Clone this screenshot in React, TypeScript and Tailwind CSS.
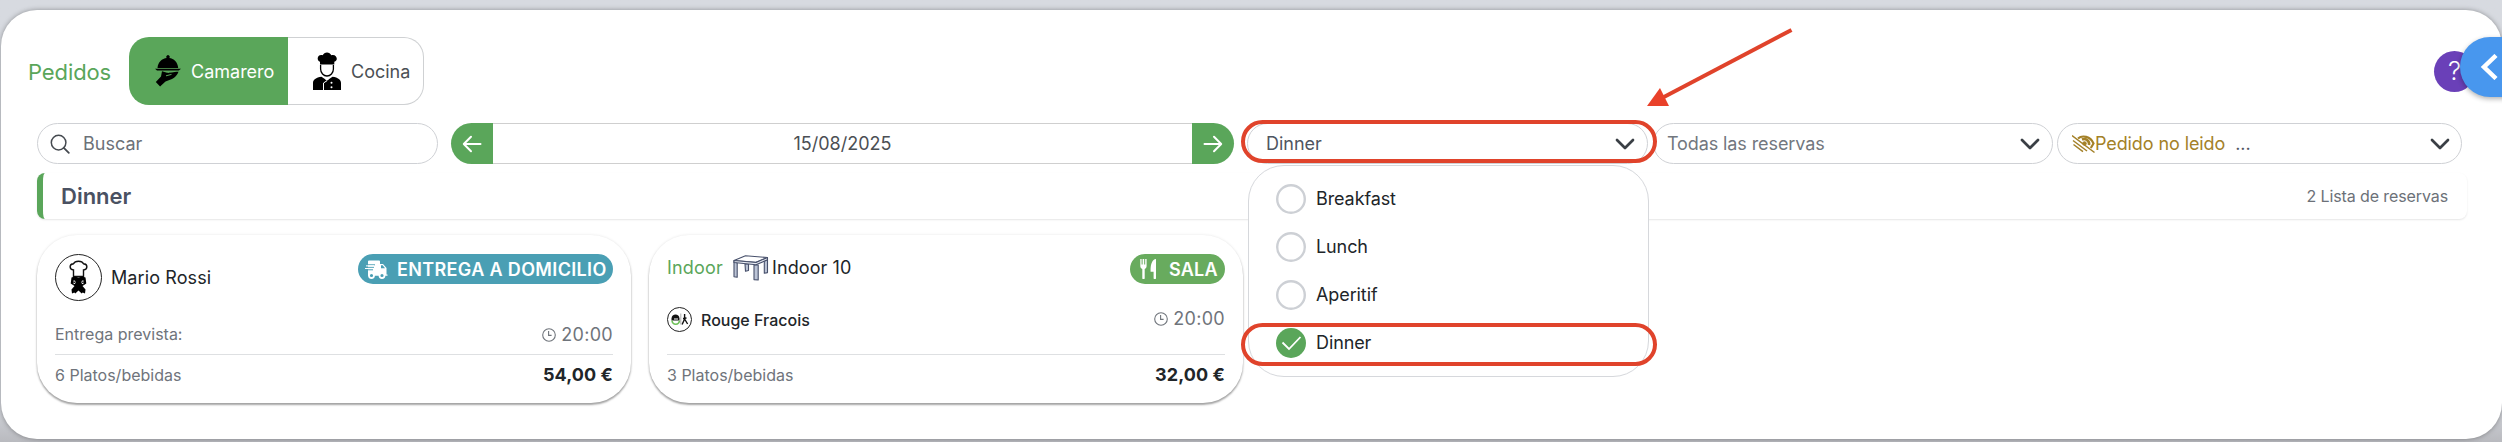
import React from "react";

const ChevronDown = () => (
  <svg width="20" height="14" viewBox="0 0 20 14" fill="none" stroke="#3a3f45" strokeWidth="2.7" strokeLinecap="round" strokeLinejoin="round">
    <path d="M2 3l8 8 8-8" />
  </svg>
);

const Arrow = ({ className = "" }) => (
  <svg className={className} width="20" height="18" viewBox="0 0 20 18" fill="none" stroke="#fff" strokeWidth="2" strokeLinecap="round" strokeLinejoin="round">
    <path d="M1.5 9H18M11 1.8L18.2 9 11 16.2" />
  </svg>
);

const WaiterIcon = () => (
  <svg width="26" height="32" viewBox="0 0 26 32">
    <path d="M2.5 13C3 7 7 3.6 11.8 3.1a1.7 1.7 0 1 1 2.4 0C19 3.6 22.6 7 23.2 13z" />
    <path d="M0 13.8h26l-2.2 1.7H2z" />
    <path d="M7 16.3l5 1.500c2.500.6 4.500-.8 11.500-1-1 3.400-3.600 5.600-6.500 7.300l-6.500 2.400-5.400 5L.8 27l5.200-5.500z" />
    <path d="M11 20.800l5.500-1.400" stroke="#5aa65a" strokeWidth="1" />
  </svg>
);

const CookIcon = () => (
  <svg width="28" height="38" viewBox="0 0 28 38">
    <path d="M7 12.500V9.800C3.500 8.500 4 3 8.300 3c.5 0 1 .1 1.400.3C11-.6 17-.6 18.300 3.300 23.500 1.500 26 8.500 21.300 9.800v2.700z" />
    <path d="M7.600 13v4c0 4 3 7 6.400 7s6.400-3 6.400-7v-4" fill="#fff" stroke="#000" strokeWidth="1.300" />
    <path d="M0 38v-7c0-3.500 3-5.500 8.500-6.300L14 28.500l5.500-3.800C25 25.500 28 27.500 28 31v7z" />
    <path d="M10.500 38V31l3.500-2.300" fill="none" stroke="#fff" strokeWidth="1" />
    <path d="M14 25l-2 2 2 1.500 2-1.500z" fill="#fff" />
    <circle cx="18.500" cy="30.800" r="1" fill="#fff" />
    <circle cx="18.500" cy="35.200" r="1" fill="#fff" />
  </svg>
);

const SearchIcon = () => (
  <svg width="20" height="20" viewBox="0 0 20 20" fill="none" stroke="#454a50" strokeWidth="1.500">
    <circle cx="8.600" cy="8.600" r="7.300" />
    <path d="M13.800 13.800l5 5" strokeLinecap="round" strokeWidth="1.800" />
  </svg>
);

const EyeOffIcon = () => (
  <svg width="23" height="20" viewBox="0 0 23 20" fill="none" stroke="#a48128">
    <path d="M6 4.500C10 1 18.500 2 21.500 9.500L18.800 14" strokeWidth="2.200" />
    <path d="M10 5.500a5 5 0 0 1 7 5.500" strokeWidth="2.600" />
    <circle cx="12.500" cy="9.500" r="1.800" fill="#a48128" />
    <path d="M0 1.500L22.500 18.500M1 6.500l14 10.500M1.500 10.500l9.500 7.200" strokeWidth="1.500" />
  </svg>
);

const ClockIcon = () => (
  <svg width="14" height="14" viewBox="0 0 14 14" fill="none" stroke="#6f747b" strokeWidth="1.100">
    <circle cx="7" cy="7" r="6.300" />
    <path d="M6.600 3v4.400h3" />
  </svg>
);

const TruckIcon = () => (
  <svg width="23" height="19" viewBox="0 0 23 19">
    <path fill="#fff" d="M3 1.500Q3 .5 4 .5h10q1 0 1 1V4h3l3.500 4v6.500h1v1.300H3z" />
    <path fill="#4a9fb4" d="M16 5.300h1.700L20 8.200h-4z" />
    <path d="M1 4.800h9M0 7.300h9M2 9.800h6" stroke="#4a9fb4" strokeWidth="1" />
    <path d="M1 5.900h8M0 8.500h7" stroke="#fff" strokeWidth="1" />
    <g fill="#4a9fb4" stroke="#fff" strokeWidth="1.800">
      <circle cx="6.500" cy="15.500" r="2.500" />
      <circle cx="17" cy="15.500" r="2.500" />
    </g>
  </svg>
);

const CutleryIcon = () => (
  <svg width="17" height="20" viewBox="0 0 17 18" preserveAspectRatio="none" fill="#fff">
    <path d="M.3 0h1.300v5H2.600V0H4.200v5h1V0h1.400v6.300c0 1.500-.8 2.200-1.900 2.600V17a1.200 1.200 0 0 1-2.400 0V8.900C1.100 8.500.3 7.800.3 6.300z" />
    <path d="M16 0v17a1.200 1.200 0 0 1-2.400 0v-5.500h-3C10.300 5 12 .5 16 0z" />
  </svg>
);

const TableIcon = () => (
  <svg width="36" height="26" viewBox="0 0 36 26" fill="#bcc4d6" stroke="#47506b" strokeWidth="1.100" strokeLinejoin="round">
    <path d="M12 9h3.500v6.500l-3 .8z" />
    <path d="M1 6v15.700l3.200.6V8z" />
    <path d="M21 10v14.600l4.200.4V10z" />
    <path d="M31.300 6v12.300l3.200-.7V5z" />
    <path d="M1 5.500L12.500.8l22 1.700L23 7.200z" fill="#fff" />
    <path d="M1 5.500v2L23 9.800l11.500-5V2.500L23 7.500z" fill="#e7eaf2" />
  </svg>
);

const ChefAvatar = () => (
  <svg width="47" height="47" viewBox="0 0 47 47">
    <circle cx="23.500" cy="23.500" r="23" fill="#fff" stroke="#222" />
    <path d="M18.500 16c-4.500-.5-4.500-6 0-6.200C20 6.300 27 6.300 28.500 9.800c4.500.2 4.500 5.700 0 6.200v6.500h-10z" fill="#fff" stroke="#111" strokeWidth="1.400" />
    <path d="M16.500 23.500l3-1 4 1 4-1 3 1 .8 6-3.800 2.500 3 3.500-.5 4-2.300-1-1 1-3.200-3-3.200 3-1-1-2.300 1-.5-4 3-3.500-3.800-2.500z" />
    <path d="M18.600 26.200a2 2 0 1 1 0 4M28.400 26.200a2 2 0 1 0 0 4" fill="#fff" />
    <circle cx="19.300" cy="28.300" r=".8" />
    <circle cx="27.800" cy="28.300" r=".8" />
  </svg>
);

const PlateAvatar = () => (
  <svg width="25" height="25" viewBox="0 0 25 25">
    <circle cx="12.500" cy="12.500" r="12" fill="#fff" stroke="#222" />
    <path d="M4.500 11.500C4.500 6 12.500 6 12.500 11.500v2h-8z" fill="#111" />
    <path d="M5 13.500c.5 5 7 5 7.500 0" fill="none" stroke="#6fc25a" strokeWidth="1.600" />
    <path d="M7 12h4" stroke="#fff" strokeWidth="1" />
    <path d="M13.800 6.500v11" stroke="#999" strokeWidth=".8" />
    <path d="M17.600 7v5l-2.500 5.500M17.600 12l3 5M16 11.500l3.500-.5" fill="none" stroke="#111" strokeWidth="1.400" />
  </svg>
);

const meals = [
  { name: "Breakfast", checked: false },
  { name: "Lunch", checked: false },
  { name: "Aperitif", checked: false },
  { name: "Dinner", checked: true },
];

const cardClass =
  "h-[168px] w-[594px] rounded-[40px] bg-white pl-[18px] pr-[18px] pt-[19px] shadow-[0_2px_2px_rgba(0,0,0,0.34),0_0_3px_rgba(0,0,0,0.1)]";

const Total = ({ items, price }: { items: string; price: string }) => (
  <div className="flex h-[41px] items-center justify-between border-t border-[#dee0e2]">
    <span className="text-[16px] text-[#6f747b]">{items}</span>
    <span className="text-[18px] font-bold tracking-[0.1px] text-[#212529]">{price}</span>
  </div>
);

const Time = () => (
  <div className="flex items-center gap-[5px] text-[#6f747b]">
    <ClockIcon />
    <span className="text-[18px] tracking-[0.3px]">20:00</span>
  </div>
);

export default function App() {
  return (
    <div className="relative h-[442px] w-[2502px] overflow-hidden bg-[#d5d8de] bg-linear-to-b from-[#d7dae0] from-90% to-[#b9babf] pl-px pt-[10px] font-['Inter',sans-serif] leading-none text-[#212529] whitespace-nowrap">
      <main className="h-[429px] w-[2501px] rounded-[36px] bg-white pt-[27px] shadow-[0_0_5px_rgba(0,0,0,0.35)]">
        {/* Header */}
        <header className="flex h-[68px] items-center pl-[27px] pr-[27px]">
          <h1 className="w-[101px] pt-[2px] text-[22px] tracking-[-0.1px] text-[#5aa65a]">Pedidos</h1>
          <div className="flex h-[68px] w-[295px]">
            <button className="flex w-[159px] items-center rounded-l-[20px] bg-[#5aa65a] pl-[26px] text-white">
              <WaiterIcon />
              <span className="ml-[10px] pt-px text-[18px]">Camarero</span>
            </button>
            <button className="flex flex-1 items-center rounded-r-[20px] border border-l-0 border-[#cfd1d3] bg-white pl-[25px] text-[#4b4f54]">
              <CookIcon />
              <span className="ml-[10px] pt-px text-[18px]">Cocina</span>
            </button>
          </div>
          <div className="ml-auto flex size-[41px] items-center justify-center rounded-full bg-[#6a40b8] text-[26px] font-light text-white">?</div>
        </header>

        {/* Filters */}
        <div className="mt-[18px] flex h-[41px] pl-[36px] text-[18px]">
          <div className="flex w-[401px] items-center rounded-full border border-[#cfd1d5] pl-[12px] text-[#6c7178]">
            <SearchIcon />
            <span className="ml-[13px]">Buscar</span>
          </div>
          <div className="ml-[13px] flex w-[783px]">
            <div className="flex w-[42px] items-center justify-center rounded-l-full bg-[#5aa65a]">
              <Arrow className="rotate-180" />
            </div>
            <div className="flex flex-1 items-center justify-center border-y border-[#cfcfcf] text-[#4b4f54]">15/08/2025</div>
            <div className="flex w-[42px] items-center justify-center rounded-r-full bg-[#5aa65a]">
              <Arrow />
            </div>
          </div>
          <div className="ml-[13px] flex w-[401px] items-center justify-between rounded-full border border-[#cfd1d5] pl-[18px] pr-[12px] text-[#4f5561]">
            <span>Dinner</span>
            <ChevronDown />
          </div>
          <div className="ml-[5px] flex w-[400px] items-center justify-between rounded-full border border-[#cfd1d5] pl-[13px] pr-[12px] text-[#72777e]">
            <span className="tracking-[-0.1px]">Todas las reservas</span>
            <ChevronDown />
          </div>
          <div className="ml-[4px] flex w-[405px] items-center rounded-full border border-[#cfd1d5] pl-[14px] pr-[11px] text-[#a48128]">
            <EyeOffIcon />
            <span className="tracking-[-0.1px]">Pedido no leido</span>
            <span className="ml-[10px] mr-auto text-[#4f5561]">...</span>
            <ChevronDown />
          </div>
        </div>

        {/* Section title */}
        <div className="ml-[36px] mt-[9px] flex h-[46px] w-[2430px] items-center justify-between rounded-lg border-l-[6px] border-[#5aa65a] pl-[18px] pr-[19px] shadow-[0_1px_2px_rgba(0,0,0,0.1)]">
          <h2 className="text-[22px] font-semibold text-[#4a5162]">Dinner</h2>
          <span className="text-[16px] tracking-[-0.1px] text-[#6c7178]">2 Lista de reservas</span>
        </div>

        {/* Orders */}
        <div className="mt-[16px] flex gap-[18px] pl-[36px]">
          <article className={cardClass}>
            <div className="flex h-[66px] justify-between">
              <div className="flex h-[47px] items-center gap-[9px] text-[18px]">
                <ChefAvatar />
                <span className="tracking-[0.1px]">Mario Rossi</span>
              </div>
              <div className="flex h-[30px] w-[255px] items-center rounded-full bg-[#4a9fb4] pl-[7px] text-[18px] font-semibold tracking-[0.35px] text-white">
                <TruckIcon />
                <span className="ml-[9px] pt-px">ENTREGA A DOMICILIO</span>
              </div>
            </div>
            <div className="flex h-[34px] items-start justify-between pt-[6px]">
              <span className="text-[16px] text-[#6f747b]">Entrega prevista:</span>
              <Time />
            </div>
            <Total items="6 Platos/bebidas" price="54,00 €" />
          </article>

          <article className={cardClass}>
            <div className="flex h-[49px] justify-between">
              <div className="flex h-[27px] items-center text-[18px]">
                <span className="w-[66px] tracking-[0.2px] text-[#5aa65a]">Indoor</span>
                <TableIcon />
                <span className="ml-[3px] tracking-[0.1px]">Indoor 10</span>
              </div>
              <div className="flex h-[30px] w-[95px] items-center rounded-full bg-[#68ab5e] pl-[10px] text-[18px] font-semibold tracking-[0.2px] text-white">
                <CutleryIcon />
                <span className="ml-[12px] pt-px">SALA</span>
              </div>
            </div>
            <div className="flex h-[51px] items-start justify-between pt-[4px]">
              <div className="flex items-center gap-[9px] text-[16px] font-medium">
                <PlateAvatar />
                <span>Rouge Fracois</span>
              </div>
              <div className="pt-[3px]">
                <Time />
              </div>
            </div>
            <Total items="3 Platos/bebidas" price="32,00 €" />
          </article>
        </div>
      </main>

      {/* Meal dropdown */}
      <ul className="absolute left-[1248px] top-[165px] flex h-[212px] w-[401px] flex-col gap-[18px] rounded-[36px] border border-[#d6d8dc] bg-white pl-[27px] pt-[18px] text-[18px] tracking-[-0.1px]">
        {meals.map((meal) => (
          <li key={meal.name} className="flex h-[30px] items-center gap-[10px]">
            {meal.checked ? (
              <svg width="30" height="30" viewBox="0 0 30 30" fill="none">
                <circle cx="15" cy="15" r="15" fill="#5aa65a" />
                <path d="M6.500 14.500l6.500 6.500L24.500 9" stroke="#fff" strokeWidth="1.800" />
              </svg>
            ) : (
              <svg width="30" height="30" viewBox="0 0 30 30" fill="none">
                <circle cx="15" cy="15" r="13.800" stroke="#cdd0d5" strokeWidth="2.400" />
              </svg>
            )}
            <span>{meal.name}</span>
          </li>
        ))}
      </ul>

      {/* Highlights */}
      <div className="absolute left-[1241px] top-[120px] h-[43px] w-[416px] rounded-full border-4 border-[#e0432b]" />
      <div className="absolute left-[1241px] top-[323px] h-[43px] w-[416px] rounded-full border-4 border-[#e0432b]" />
      <svg className="absolute left-[1640px] top-[20px]" width="160" height="90" viewBox="0 0 160 90">
        <path d="M151.500 10L22 78" stroke="#e0432b" strokeWidth="4" />
        <path d="M7 86l13-18 9 18z" fill="#e9412a" />
      </svg>

      {/* Side drawer handle */}
      <div className="absolute left-[2460px] top-[37px] flex h-[60px] w-[60px] items-center rounded-l-[30px] bg-[#4897ee] pl-[20px] shadow-[0_2px_5px_rgba(0,0,0,0.3)]">
        <svg width="18" height="26" viewBox="0 0 18 26" fill="none" stroke="#fff" strokeWidth="4.500">
          <path d="M16 1.500L4 13l12 11.500" />
        </svg>
      </div>
    </div>
  );
}
